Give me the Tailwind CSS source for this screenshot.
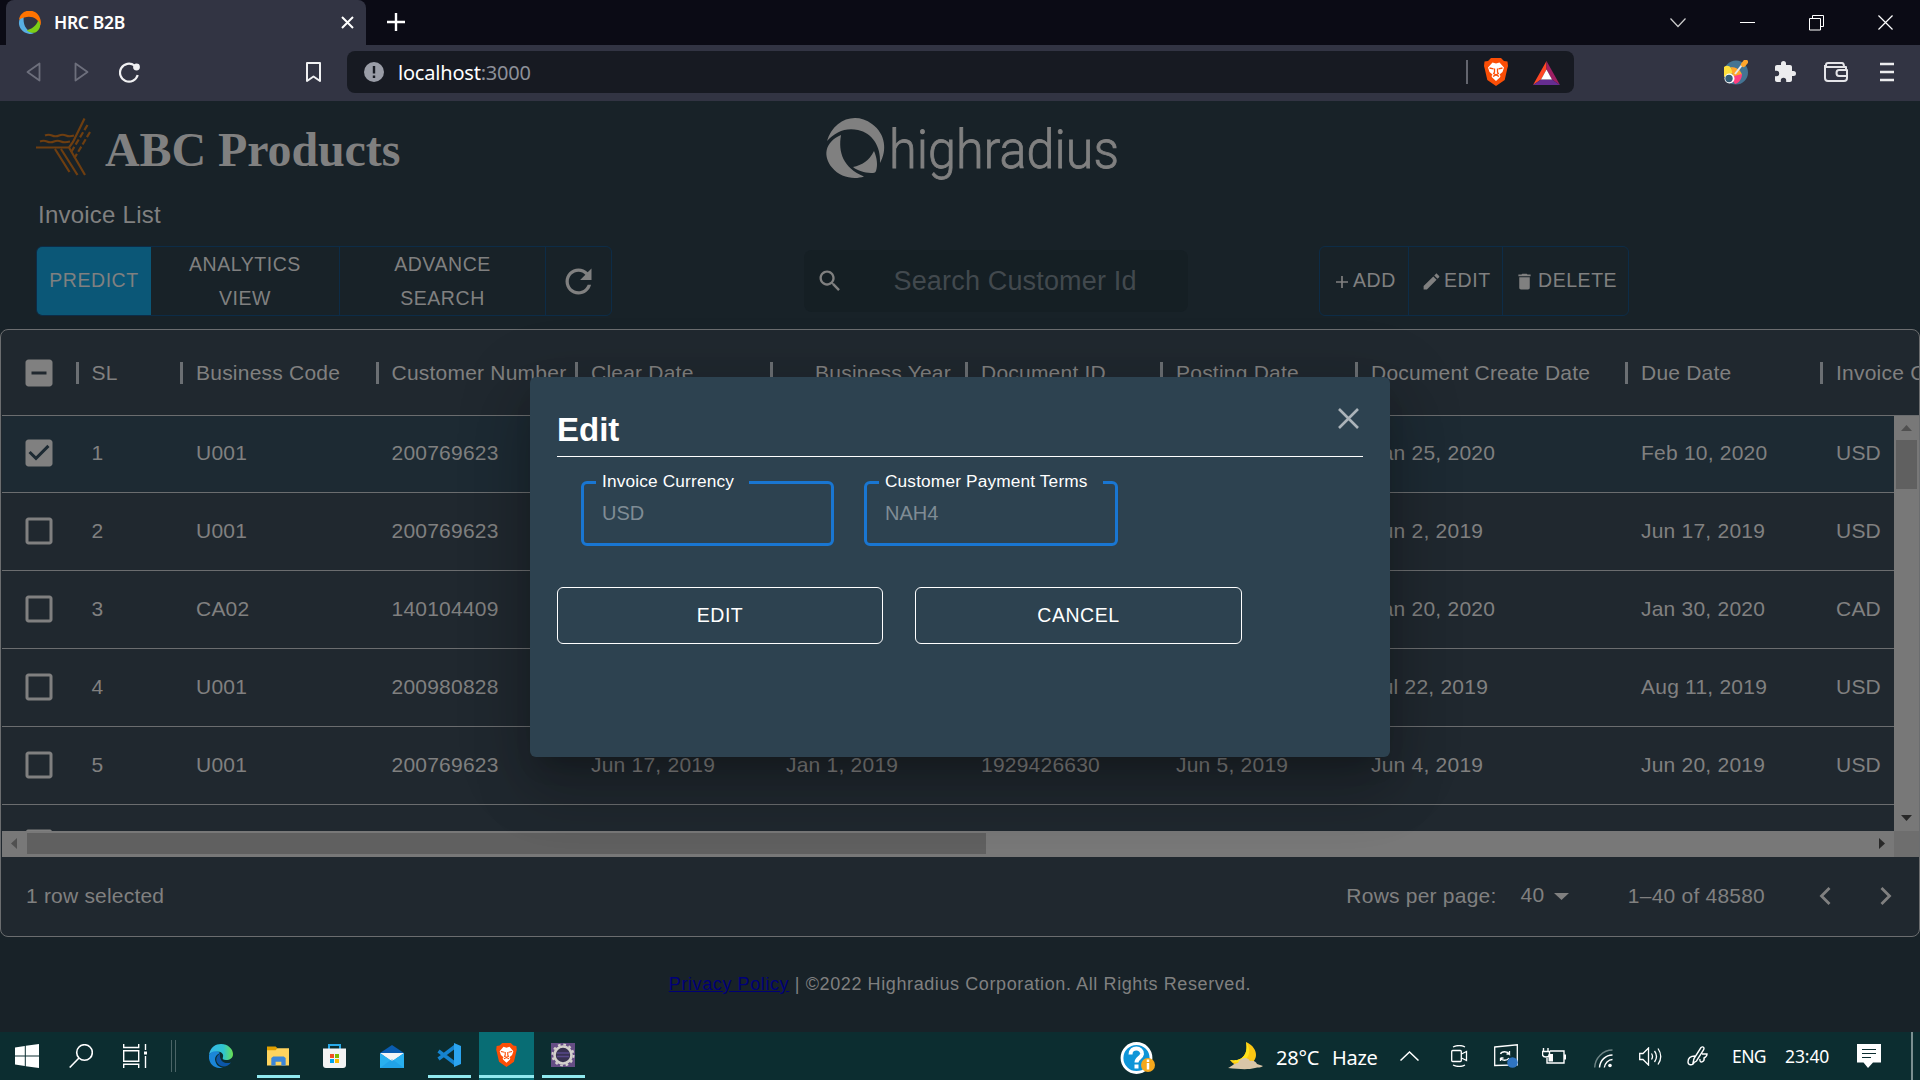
<!DOCTYPE html>
<html lang="en">
<head>
<meta charset="utf-8">
<title>HRC B2B</title>
<script src="https://cdn.jsdelivr.net/npm/@tailwindcss/browser@4"></script>
</head>
<body class="w-[1920px] h-[1080px] overflow-hidden bg-[#182228] font-['Liberation_Sans',sans-serif]">
<svg class="hidden">
  <symbol id="lion" viewBox="0 0 24 28">
    <path fill="#fb4e06" d="M7 0h10l3 3 3.500.5L24 8l-.8 3-2.500 11L12 28 3.300 22 .8 11 0 8l.5-4.500L4 3z"/>
    <path fill="#fff" d="M8.500 4.500 12 5.500l3.500-1 4.500 5-1.500 4.500-3 2.500 1 1.500-.7 1.500L12 23l-3.800-3.500-.7-1.500 1-1.500-3-2.500L4 9.500z"/>
    <path fill="none" stroke="#fb4e06" stroke-width="1.300" d="m5.500 10 4 .8M18.500 10l-4 .8M10.500 10.500v3.500l-.8 1.500L12 17l2.300-1.500-.8-1.500v-3.500M9 18.300l3-1.300 3 1.300"/>
  </symbol>
  <symbol id="box" viewBox="0 0 24 24"><path d="M19 5v14H5V5h14m0-2H5c-1.100 0-2 .9-2 2v14c0 1.100.9 2 2 2h14c1.100 0 2-.9 2-2V5c0-1.100-.9-2-2-2z"/></symbol>
  <symbol id="box-on" viewBox="0 0 24 24"><path d="M19 3H5c-1.110 0-2 .9-2 2v14c0 1.100.89 2 2 2h14c1.110 0 2-.9 2-2V5c0-1.100-.89-2-2-2zm-9 14l-5-5 1.410-1.410L10 14.170l7.590-7.590L19 8l-9 9z"/></symbol>
  <symbol id="box-some" viewBox="0 0 24 24"><path d="M19 3H5c-1.100 0-2 .9-2 2v14c0 1.100.9 2 2 2h14c1.100 0 2-.9 2-2V5c0-1.100-.9-2-2-2zm-2 10H7v-2h10v2z"/></symbol>
</svg>

<!-- Tab strip -->
<div class="flex h-[45px] bg-[#0b0b15] pl-[6px]">
  <div class="flex w-[360px] items-center rounded-t-lg bg-[#323443] pl-3 pr-[12px]">
    <svg class="size-[23px]" viewBox="0 0 24 24">
      <path fill="#58aee3" d="M5 4C-2 10 0 22 12 24c2 0 4-.5 5-1C8 21 5 14 6 6z"/>
      <path fill="#ff7300" d="M1 9C3-3 20-4 23.500 9c.5 2 .5 4 0 6C20 7 13 3 1 9z"/>
      <path fill="#7ccf16" d="M21 10c3 3 3 8-1 11-3 3-7 2-11-1 5-1 10-4 12-10z"/>
    </svg>
    <span class="ml-[13px] w-[200px] whitespace-nowrap font-['Noto_Sans',sans-serif] text-[17.500px] font-semibold tracking-[-0.350px] text-white">HRC B2B</span>
    <svg class="ml-auto size-[13px]" viewBox="0 0 13 13" stroke="#fff" stroke-width="2"><path d="m1 1 11 11M12 1 1 12"/></svg>
  </div>
  <svg class="ml-[21px] mt-[13px] size-[18px]" viewBox="0 0 18 18" stroke="#fff" stroke-width="2.400"><path d="M9 0v18M0 9h18"/></svg>
  <div class="ml-auto flex items-center pr-[27px]">
    <svg class="mr-[54px] h-[10px] w-[16px]" viewBox="0 0 16 10" fill="none" stroke="#ccc" stroke-width="1.200"><path d="m.5.500 7.500 8 7.500-8"/></svg>
    <div class="mr-[54px] h-px w-[15px] bg-white"></div>
    <svg class="mr-[54px] h-4 w-[15px]" viewBox="0 0 15 16" fill="none" stroke="#fff"><path d="M.5 3.500h11v11.500H.5zM3.500 3.500V.5h11v11h-3"/></svg>
    <svg class="size-[15px]" viewBox="0 0 16 16" stroke="#fff" stroke-width="1.300"><path d="m.5.500 15 15M15.500.5l-15 15"/></svg>
  </div>
</div>

<!-- Address bar -->
<div class="flex h-[56px] items-start bg-[#323443] pl-[26px] pt-[6px] pr-[26px]">
  <div class="flex h-[42px] w-[321px] items-center">
    <svg class="h-5 w-[15px]" viewBox="0 0 15 20" fill="none" stroke="#6d6f7c" stroke-width="1.800" stroke-linejoin="round"><path d="M13.500 1.500v17L1.500 10z"/></svg>
    <svg class="ml-[33px] h-5 w-[15px]" viewBox="0 0 15 20" fill="none" stroke="#6d6f7c" stroke-width="1.800" stroke-linejoin="round"><path d="M1.500 1.500v17l12-8.500z"/></svg>
    <svg class="ml-[30px] size-[21px]" viewBox="0 0 21 21" fill="none" stroke="#f0f0f2" stroke-width="2.200"><path d="M15.500 3.500a9 9 0 1 0 3.200 9.500"/><circle cx="17.500" cy="5" r="2.300" fill="#f0f0f2"/></svg>
    <svg class="ml-[166px] h-[21px] w-[15px]" viewBox="0 0 15 21" fill="none" stroke="#f0f0f2" stroke-width="2" stroke-linejoin="round"><path d="M1 1h13v18l-6.500-4.500L1 19z"/></svg>
  </div>
  <div class="flex h-[42px] w-[1227px] items-center rounded-lg bg-[#171a22] pl-[17px] pr-[14px]">
    <svg class="size-5" viewBox="0 0 20 20"><circle cx="10" cy="10" r="10" fill="#9a9da7"/><path stroke="#171a22" stroke-width="2.400" d="M10 4v7.500M10 13.500V16"/></svg>
    <span class="ml-[14px] mt-px whitespace-nowrap font-['Noto_Sans',sans-serif] text-[20px] tracking-[-0.200px] text-white">localhost<span class="text-[#8d9099]">:3000</span></span>
    <div class="ml-auto h-6 w-0.5 bg-[#63656e]"></div>
    <svg class="ml-4 h-[28px] w-[24px]"><use href="#lion"/></svg>
    <svg class="ml-[25px] mt-0.5 h-6 w-[27px]" viewBox="0 0 27 24"><path fill="#ff4724" d="M13.500 0 0 24l8-5.500 5.500-10z"/><path fill="#9e1f63" d="m13.500 0 13.500 24-8-5.500-5.500-10z"/><path fill="#662d91" d="M0 24h27l-8-5.500H8z"/><path fill="#fff" d="m13.500 8.500 5.500 10H8z"/></svg>
  </div>
  <div class="ml-auto flex h-[42px] items-center">
    <svg class="mr-px size-[25px]" viewBox="0 0 25 25"><circle cx="13" cy="12.500" r="12" fill="#437493"/><path fill="#ffdf3c" d="M1 7c4-3 8 0 9 6l-9 4z"/><path fill="#ffa62b" d="M8 7c5 0 10 3 11 8l-9 2z"/><path fill="#ff3f7f" d="M19 14c0 5-3 9-7 10l-5-7z"/><circle cx="6.500" cy="18.500" r="5" fill="#fff"/><circle cx="6" cy="18.500" r="3.700" fill="#345c75"/><path stroke="#e8e8e8" stroke-width="2" d="m12 14 7-9"/><path stroke="#ffa62b" stroke-width="5" stroke-linecap="round" d="m20.500 4.500 2-2.500"/></svg>
    <svg class="ml-[24px] size-[24px]" viewBox="0 0 24 24" fill="#ececee"><path d="M20.500 11H19V7c0-1.100-.9-2-2-2h-4V3.500a2.500 2.500 0 0 0-5 0V5H4c-1.100 0-2 .9-2 2v3.800h1.500a2.700 2.700 0 0 1 0 5.400H2V20c0 1.100.9 2 2 2h3.800v-1.500a2.700 2.700 0 0 1 5.400 0V22H17c1.100 0 2-.9 2-2v-4h1.500a2.500 2.500 0 0 0 0-5z"/></svg>
    <svg class="ml-[27px] h-[20px] w-[24px]" viewBox="0 0 24 20" fill="none" stroke="#e4e4e8" stroke-width="2" stroke-linejoin="round"><path d="M22 7V5H2V3q0-2 2-2h14q2 0 2 4M1 3v13q0 3 3 3h16q3 0 3-3V8H15q-2.500 0-2.500 3t2.500 3h8"/></svg>
    <svg class="ml-[32px] h-5 w-[14px]" viewBox="0 0 14 20" stroke="#ececee" stroke-width="2.300"><path d="M0 2h14M0 10h14M0 18h14"/></svg>
  </div>
</div>

<!-- Page -->
<main class="relative h-[931px] overflow-hidden bg-[#182228] text-[#808080]">
  <header class="flex h-[90px] pl-[34px]">
    <svg class="mt-[14px] h-[64px] w-[60px]" viewBox="34 115 60 64" fill="none" stroke="#6e3e10" stroke-width="2.200">
      <path d="M36 147.500h33L85 175M61 149l16.500 26M55 149l14.500 23M84.500 118.500 73 142l-4 5.500"/>
      <path stroke-dasharray="6 2.500" d="M87.500 125 70 154M90 132 74.500 158"/>
      <path d="M45 135.500q3.500-1.500 7 0t7 0 7 0 8 0M40 141.500q3.500-1.500 7 0t7 0 7 0 9 0"/>
    </svg>
    <h1 class="ml-[11px] mt-[21px] w-[310px] whitespace-nowrap font-['Liberation_Serif',serif] text-[48px] font-bold leading-[55px] tracking-[-0.100px]">ABC Products</h1>
    <svg class="ml-[405px] mt-[9px] h-[80px] w-[310px] overflow-visible" viewBox="820 110 310 80" fill="#808080">
      <path d="M827 141C833 120 855 111 872 124c14 10 15 27 8 39 1-17-8-30-22-33-12-3-23 2-31 11z"/>
      <path d="M841 135c-3 17 2 33 23 41.500-10 3.500-24 1-32-9-9-11-8-25 9-32.500z"/>
      <path d="M874 151c3 7 4 14 2 20-1 2-2 2-5 2-7-.5-13-2-18-6 9-2 16-6 21-16z"/>
      <text x="889" y="167.500" font-family="Roboto" font-weight="300" font-size="54" stroke="#808080" stroke-width=".8" textLength="230" lengthAdjust="spacingAndGlyphs">highradius</text>
    </svg>
  </header>
  <h2 class="ml-[38px] mt-[9px] h-[46px] text-[24px] leading-[30px] tracking-[0.230px]">Invoice List</h2>
  <div class="flex h-[70px] pl-[36px] text-center text-[19.500px] leading-[34px] tracking-[0.550px]">
    <div class="flex w-[576px] rounded-md border border-[#0d2c47]">
      <button class="w-[114px] rounded-l-[5px] bg-[#0b5777] pb-0.5">PREDICT</button>
      <button class="w-[189px] border-r border-[#0d2c47] px-8 pb-0.5">ANALYTICS VIEW</button>
      <button class="w-[206px] border-r border-[#0d2c47] px-10 pb-0.5">ADVANCE SEARCH</button>
      <div class="flex grow items-center justify-center"><svg class="size-[39px]" viewBox="0 0 24 24" fill="#808080"><path d="M17.650 6.350C16.200 4.900 14.210 4 12 4c-4.420 0-7.990 3.580-7.990 8s3.570 8 7.990 8c3.730 0 6.840-2.550 7.730-6h-2.080c-.82 2.330-3.040 4-5.650 4-3.310 0-6-2.690-6-6s2.690-6 6-6c1.660 0 3.140.69 4.220 1.780L13 11h7V4l-2.350 2.350z"/></svg></div>
    </div>
    <div class="ml-[192px] mt-[4px] flex h-[62px] w-[384px] items-center rounded-lg bg-[#151f24] pl-[12px]">
      <svg class="size-[28px]" viewBox="0 0 24 24" fill="#808080"><path d="M15.500 14h-.79l-.28-.27C15.410 12.590 16 11.110 16 9.500 16 5.910 13.090 3 9.500 3S3 5.910 3 9.500 5.910 16 9.500 16c1.610 0 3.090-.59 4.230-1.570l.27.28v.79l5 4.990L20.490 19l-4.990-5zm-6 0C7.010 14 5 11.990 5 9.500S7.010 5 9.500 5 14 7.010 14 9.500 11.990 14 9.500 14z"/></svg>
      <span class="ml-[49.500px] whitespace-nowrap text-[27px] tracking-[0.170px] text-[#42494e]">Search Customer Id</span>
    </div>
    <div class="ml-[131px] flex w-[310px] rounded-md border border-[#0d2c47]">
      <button class="flex w-[89px] items-center border-r border-[#0d2c47] pb-0.5 pl-[16px]"><svg class="mr-[5px] mt-1 size-[12px]" viewBox="0 0 13 13" stroke="#808080" stroke-width="1.800"><path d="M6.500 0v13M0 6.500h13"/></svg>ADD</button>
      <button class="flex w-[93.500px] items-center border-r border-[#0d2c47] pb-0.5 pl-[12px]"><svg class="mr-[2px] mt-[3px] size-[21px]" viewBox="0 0 24 24" fill="#808080"><path d="M3 17.250V21h3.750L17.810 9.940l-3.750-3.750L3 17.250zM20.710 7.040c.39-.39.39-1.020 0-1.410l-2.340-2.340c-.39-.39-1.020-.39-1.410 0l-1.830 1.830 3.750 3.750 1.830-1.830z"/></svg>EDIT</button>
      <button class="flex grow items-center pb-0.5 pl-[11px]"><svg class="mr-[3.500px] mt-[3px] size-[21px]" viewBox="0 0 24 24" fill="#808080"><path d="M6 19c0 1.100.9 2 2 2h8c1.100 0 2-.9 2-2V7H6v12zM19 4h-3.500l-1-1h-5l-1 1H5v2h14V4z"/></svg>DELETE</button>
    </div>
  </div>

  <!-- Invoice grid -->
  <section class="mt-[13px] flex h-[608px] w-[1920px] flex-col overflow-hidden rounded-lg border border-[#6b6d6f] bg-[#20282f] pl-px text-[21px] leading-[30px] tracking-[0.220px]">
    <div id="head" class="flex h-[86px] w-[1917px] shrink-0 items-center overflow-hidden border-b border-[#6b6d6f]"></div>
    <div class="flex h-[415px] shrink-0">
      <div id="rows" class="h-[415px] w-[1892px] overflow-hidden"></div>
      <div class="flex w-[25px] flex-col items-center bg-[#787878]">
        <svg class="mt-[9px] h-[6px] w-[11px]" viewBox="0 0 11 6" fill="#505050"><path d="M0 6h11L5.500 0z"/></svg>
        <div class="mt-[9px] h-[49px] w-[21px] bg-[#606060]"></div>
        <svg class="mb-[10px] mt-auto h-[6px] w-[11px]" viewBox="0 0 11 6" fill="#282828"><path d="M0 0h11L5.500 6z"/></svg>
      </div>
    </div>
    <div class="flex h-[26px] shrink-0 items-center bg-[#787878]">
      <svg class="mb-px ml-[9px] h-[11px] w-[6px]" viewBox="0 0 6 11" fill="#505050"><path d="M6 0v11L0 5.500z"/></svg>
      <div class="mb-px ml-[10px] h-[21px] w-[959px] bg-[#606060]"></div>
      <svg class="mb-px ml-auto h-[11px] w-[6px]" viewBox="0 0 6 11" fill="#282828"><path d="M0 0v11l6-5.500z"/></svg>
      <div class="ml-[9px] h-[26px] w-[25px] bg-[#6e6e6e]"></div>
    </div>
    <div class="flex h-[78px] items-center pl-[24px]">
      <span class="tracking-[0.200px]">1 row selected</span>
      <span class="ml-auto">Rows per page:</span>
      <span class="ml-[24px] -mt-0.5">40</span>
      <svg class="ml-[10px] h-[7px] w-[15px]" viewBox="0 0 15 7" fill="#808080"><path d="M0 0h15L7.500 7z"/></svg>
      <span class="ml-[58.500px]">1–40 of 48580</span>
      <svg class="ml-[54px] h-[18px] w-[12px]" viewBox="0 0 12 18" fill="none" stroke="#808080" stroke-width="2.800"><path d="m10.500 1-8 8 8 8"/></svg>
      <svg class="ml-[49px] mr-[27px] h-[18px] w-[12px]" viewBox="0 0 12 18" fill="none" stroke="#808080" stroke-width="2.800"><path d="m1.500 1 8 8-8 8"/></svg>
    </div>
  </section>
  <footer class="mt-[32px] text-center text-[18px] leading-[30px] tracking-[0.600px]"><a class="text-[#000077] underline">Privacy Policy</a> | ©2022 Highradius Corporation. All Rights Reserved.</footer>

  <!-- Edit dialog -->
  <div class="absolute left-[530px] top-[276px] h-[380px] w-[860px] rounded-md bg-[#2d4250] px-[27px] text-white shadow-[0_16px_22px_-10px_rgb(0_0_0/0.2),0_36px_57px_4px_rgb(0_0_0/0.14),0_14px_69px_12px_rgb(0_0_0/0.12)]">
    <div class="flex h-[80px] items-center justify-between border-b border-white">
      <h3 class="mt-[27px] text-[33px] font-bold leading-[40px]">Edit</h3>
      <svg class="mr-[4px] mt-[4px] size-[21px]" viewBox="0 0 21 21" stroke="#abb3b9" stroke-width="2.600"><path d="m1 1 19 19M20 1 1 20"/></svg>
    </div>
    <div class="flex gap-[30px] pl-[24px] pt-[13px]">
      <fieldset class="h-[76px] w-[253px] rounded-md border-[3px] border-[#1976d2] pl-[12px]">
        <legend class="h-[24px] w-[153px] whitespace-nowrap pl-[6px] text-[17.250px] leading-[22px] tracking-[0.160px]">Invoice Currency</legend>
        <div class="pl-[6px] pt-[6px] text-[20px] leading-[26px] text-[#7f8c95]">USD</div>
      </fieldset>
      <fieldset class="h-[76px] w-[254px] rounded-md border-[3px] border-[#1976d2] pl-[12px]">
        <legend class="h-[24px] w-[224px] whitespace-nowrap pl-[6px] text-[17.250px] leading-[22px] tracking-[0.160px]">Customer Payment Terms</legend>
        <div class="pl-[6px] pt-[6px] text-[20px] leading-[26px] text-[#7f8c95]">NAH4</div>
      </fieldset>
    </div>
    <div class="mt-[41px] flex gap-[32px] text-[19.500px] tracking-[0.550px]">
      <button class="h-[57px] w-[326px] rounded-md border border-white">EDIT</button>
      <button class="h-[57px] w-[327px] rounded-md border border-white">CANCEL</button>
    </div>
  </div>
</main>

<!-- Taskbar -->
<div class="flex h-[48px] items-center bg-[#0c2d30] pl-[15px] font-['Noto_Sans',sans-serif] text-white">
  <svg class="size-6" viewBox="0 0 24 24" fill="#fff"><path d="M0 3.500 9.800 2v9.500H0zM10.800 1.800 24 0v11.500H10.800zM0 12.500h9.800V22L0 20.500zM10.800 12.500H24V24l-13.200-1.800z"/></svg>
  <svg class="ml-[30px] size-6" viewBox="0 0 24 24" fill="none" stroke="#fff" stroke-width="1.600"><circle cx="15.500" cy="8.500" r="7.800"/><path d="M10 14 .7 23.500"/></svg>
  <svg class="ml-[30px] size-6" viewBox="0 0 24 24" fill="none" stroke="#fff" stroke-width="1.400"><path d="M.7 0v3.500h15V0M.7 6.700h15v10.500H.7zM.7 24v-3.700h15V24M22.500 0v6M22.500 12v12"/><path fill="#fff" stroke="none" d="M21 7.500h3v3h-3z"/></svg>
  <div class="ml-[24px] h-8 w-[5px] border-x border-[#4b6466]"></div>
  <svg class="ml-[33px] size-6" viewBox="0 0 24 24">
    <defs><linearGradient id="eg"><stop offset="0" stop-color="#35b5e8"/><stop offset=".6" stop-color="#2fc4d0"/><stop offset="1" stop-color="#6ae04e"/></linearGradient></defs>
    <path fill="url(#eg)" d="M0 11C1 3 7 0 12 0c7 0 12 5 12 10 0 4-3 6-7 6-3 0-4-1-3-3 1-4-3-6-7-5-3 0-6 1-7 3z"/>
    <path fill="#1b86d8" d="M0 11c2-4 8-5 11-2-5 2-6 6-4 10 1 3 4 4 7 5C5 25-1 19 0 11z"/><path fill="#0c56a8" d="M11 9.500c-5 3-5 9 0 12 4 2 8 1 11-3-6 2-12-1-11-9z"/>
  </svg>
  <div class="ml-[24px] flex h-[48px] w-[43px] flex-col items-center justify-between pb-[2px] pt-[14px]">
    <svg class="mr-px h-5 w-[22px]" viewBox="0 0 23 20"><path fill="#e0a000" d="M0 0h9l2 2v4H0z"/><path fill="#ffd45e" d="M0 4h9l2-2h12v18H0z"/><path fill="#3d87d8" d="M4.500 20v-8l2-1.500h11l2 1.500v8H15v-4H9v4z"/></svg>
    <div class="h-[3px] w-full bg-[#90e9ef]"></div>
  </div>
  <svg class="ml-[23px] h-6 w-[23px]" viewBox="0 0 23 24"><path fill="none" stroke="#29a9e8" stroke-width="2" d="M6 6V1h11v5"/><path fill="#f3f3f3" d="M0 4.500h23V21q0 3-3 3H3q-3 0-3-3z"/><path fill="#f25022" d="M7 10h4v4H7z"/><path fill="#7fba00" d="M12 10h4v4h-4z"/><path fill="#00a4ef" d="M7 15h4v4H7z"/><path fill="#ffb900" d="M12 15h4v4h-4z"/></svg>
  <svg class="ml-[34px] h-[23px] w-6" viewBox="0 0 24 23"><path fill="#0a5cb0" d="M0 8 12 0l12 8v4H0z"/><path fill="#f5f5f5" d="M0 8h24L12 17z"/><path fill="#29b0ef" d="m0 8 12 8 12-8v15H0z"/><path fill="#f5f5f5" d="M1 8h22l-11 7.500z"/><path fill="#1690df" d="m0 23 12-9 12 9z" opacity=".4"/></svg>
  <div class="ml-[24px] flex h-[48px] w-[43px] flex-col items-center justify-between pb-[2px] pt-[11px]">
    <svg class="mr-[2px] size-6" viewBox="0 0 24 24"><path fill="none" stroke="#1583cf" stroke-width="3.500" d="M1.500 8 18 20.500M1.500 16 18 3.500"/><path fill="#2ba4f0" d="m17 0 7 3v18l-7 3z"/></svg>
    <div class="h-[3px] w-full bg-[#90e9ef]"></div>
  </div>
  <div class="ml-[8px] flex h-[48px] w-[55px] flex-col items-center justify-between bg-[#086d74] pb-[2px] pt-[11px]">
    <svg class="mr-px h-6 w-[21px]"><use href="#lion"/></svg>
    <div class="h-[3px] w-full bg-[#90e9ef]"></div>
  </div>
  <div class="ml-[8px] flex h-[48px] w-[43px] flex-col items-center justify-between pb-[2px] pt-[11px]">
    <svg class="mr-[2px] size-6" viewBox="0 0 24 24"><path fill="#654d85" d="M0 0h24v24H0z"/><circle cx="12" cy="12" r="8.500" fill="#383151" stroke="#d3d0cc" stroke-width="2.600"/><circle cx="12" cy="12" r="10.500" fill="none" stroke="#d3d0cc" stroke-width="2" stroke-dasharray="2.700 2.800"/><path stroke="#57488a" stroke-width="1.500" d="M6 10h12M6 13.500h12"/></svg>
    <div class="h-[3px] w-full bg-[#90e9ef]"></div>
  </div>
  <svg class="ml-[535px] mt-1 h-8 w-[36px]" viewBox="0 0 36 32"><circle cx="16.500" cy="16" r="14.500" fill="#0e95d8" stroke="#fff" stroke-width="2.800"/><path fill="none" stroke="#fff" stroke-width="4" d="M10.500 12.500C10.500 4 22.500 5 22 12c-.5 4-5.500 4-5.500 8.500M16.500 22.500v4"/><circle cx="28" cy="23" r="7" fill="#f5a81c"/><path stroke="#fff" stroke-width="2.500" d="M28 17.500V20M28 21v6.500"/></svg>
  <svg class="ml-[72px] h-[30px] w-[36px]" viewBox="0 0 36 30"><path fill="#fcc612" d="M18 1c14 6 14 23-4 24C8 25 4 22 2 19c9 2 19-3 16-18z"/><path fill="#ffe31a" d="M18 1c5 7 5 16-5 20-5 1-9 0-11-2 9 2 19-3 16-18z"/><path fill="#d9c6a8" d="M0 27c3-1 6-5 10-5 2-5 9-7 12-2 4-1 6 1 7 3l6 2c-2 2-5 1-8 2-8 2-16 1-27 0z"/></svg>
  <span class="ml-[12px] mt-1 w-[56px] whitespace-nowrap text-[20px] tracking-[-0.200px]">28°C</span>
  <span class="mt-1 w-[46px] whitespace-nowrap text-[20px] tracking-[-0.300px]">Haze</span>
  <svg class="ml-[22px] h-[10px] w-[19px]" viewBox="0 0 19 10" fill="none" stroke="#fff" stroke-width="1.500"><path d="m.5 9.500 9-8.500 9 8.500"/></svg>
  <svg class="ml-[32px] h-[22px] w-[17px]" viewBox="0 0 17 22" fill="none" stroke="#fff" stroke-width="1.300"><path d="M.7 6.500q0-1 1-1h7.600q1 0 1 1v9q0 1-1 1H1.700q-1 0-1-1zM10.500 9l5-2.500v9l-5-2.500M2 2q6.500-3 12 0M2 20q6.500 3 12 0"/></svg>
  <svg class="ml-[26px] size-6" viewBox="0 0 24 24" fill="none" stroke="#fff" stroke-width="1.300"><path d="M.7 3 23.300.8v20L.7 21.500zM6.500 10c1-3 7-3 9 0V7M15.500 10h-3M15 14c-2 3-7 3-8.500 0v3M6.500 14h3"/><circle cx="18.500" cy="18.500" r="5.300" fill="#2f74c0" stroke="none"/></svg>
  <svg class="ml-[24px] h-[18px] w-6" viewBox="0 0 24 18" fill="none" stroke="#fff" stroke-width="1.400"><path d="M8 4h14v12H5v-5M23.300 7.500v5M1.500 1v3M6 1v3M.5 4.500h7v3q0 2.500-3.500 2.500T.5 7.500z"/><path fill="#fff" stroke="none" d="M6.500 7H11v7.500H6.500z"/></svg>
  <svg class="ml-[28px] mt-1 h-[19px] w-[19px]" viewBox="0 0 19 19" fill="none" stroke="#fff" stroke-width="1.400"><path stroke="#6f8586" d="M.7 18.500C1 9 9 1 18.500 1"/><path d="M5.500 18.500C6 11.500 11.500 6 18.500 6M10.300 18.500c.5-4 4-8 8.200-8"/><circle cx="16" cy="16.500" r="1.800" fill="#fff" stroke="none"/></svg>
  <svg class="ml-[26px] h-[19px] w-[23px]" viewBox="0 0 23 19" fill="none" stroke="#fff" stroke-width="1.300"><path d="M.7 6.500H4L9.500 1v17L4 12.500H.7z"/><path d="M12.500 6.500q2 3 0 6M15.500 4q4 5.500 0 11M19 1.500q5.500 8 0 16"/></svg>
  <svg class="ml-[25px] h-5 w-[21px]" viewBox="0 0 21 20" fill="none" stroke="#fff" stroke-width="1.400"><path d="m6 17 1-4.500L14 1.500q2-1.500 3 .5 0 1-.5 2L9.500 15zM8 10c-5 0-7 3-7 6s4 4 6 1M13 13c-1 5 5 3 4-1 2-1 3-3 3-4h-5"/></svg>
  <span class="ml-[24px] mt-px w-[53px] text-[17.500px] tracking-[-0.600px]">ENG</span>
  <span class="mt-px w-[72px] text-[17.500px] tracking-[-0.100px]">23:40</span>
  <svg class="size-6" viewBox="0 0 24 24"><path fill="#fff" d="M0 0h24v18.500h-8L11 24l-4.500-5.500H0z"/><path stroke="#0c2d30" stroke-width="1.200" d="M5 5.500h14M5 9.500h14M5 13.500h9"/></svg>
  <div class="ml-[30px] h-[48px] w-0.5 bg-[#7b8f90]"></div>
</div>

<script>
const widths = [104.5, 195.5, 199.5, 195, 195, 195, 195, 270, 195, 195];
const heads = ['SL', 'Business Code', 'Customer Number', 'Clear Date', 'Business Year', 'Document ID', 'Posting Date', 'Document Create Date', 'Due Date', 'Invoice Currency'];
const data = [
  ['1', 'U001', '200769623', '', '', '', '', 'Jan 25, 2020', 'Feb 10, 2020', 'USD'],
  ['2', 'U001', '200769623', '', '', '', '', 'Jun 2, 2019', 'Jun 17, 2019', 'USD'],
  ['3', 'CA02', '140104409', '', '', '', '', 'Jan 20, 2020', 'Jan 30, 2020', 'CAD'],
  ['4', 'U001', '200980828', '', '', '', '', 'Jul 22, 2019', 'Aug 11, 2019', 'USD'],
  ['5', 'U001', '200769623', 'Jun 17, 2019', 'Jan 1, 2019', '1929426630', 'Jun 5, 2019', 'Jun 4, 2019', 'Jun 20, 2019', 'USD'],
  []
];
const check = id => `<div class="w-[73.5px] shrink-0 pl-[19px]"><svg class="size-[36px] fill-[#808080]"><use href="#${id}"/></svg></div>`;
document.getElementById('head').innerHTML = check('box-some') + heads.map((h, i) =>
  `<div class="flex shrink-0 items-center" style="width:${widths[i]}px"><i class="mr-[13px] h-[22px] w-[3px] shrink-0 bg-[#6b6f73]"></i><span class="grow whitespace-nowrap ${i === 4 ? 'text-right pr-[14px]' : ''}">${h}</span></div>`).join('');
document.getElementById('rows').innerHTML = data.map((r, n) =>
  `<div class="flex items-center border-b border-[#6b6d6f] pb-0.5 ${n === 0 ? 'h-[77px] bg-[#1d2a33]' : 'h-[78px]'}">` + check(n ? 'box' : 'box-on') +
  r.map((c, i) => `<div class="shrink-0 whitespace-nowrap pl-[16px]" style="width:${widths[i]}px">${c}</div>`).join('') + '</div>').join('');
</script>
</body>
</html>
